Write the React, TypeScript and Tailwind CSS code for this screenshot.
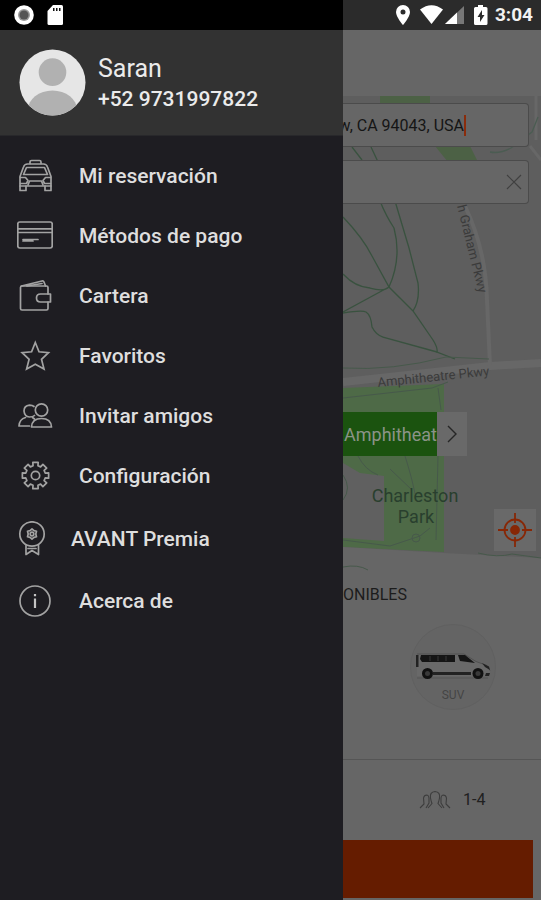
import React from "react";

const line = {
  fill: "none",
  stroke: "#a3a3a3",
  strokeWidth: 1.7,
  strokeLinejoin: "round",
  strokeLinecap: "round",
} as const;

function Icon({ children }: { children: React.ReactNode }) {
  return (
    <svg viewBox="0 0 36 36" className="size-9 shrink-0" {...line} aria-hidden="true">
      {children}
    </svg>
  );
}

const gearPath = (() => {
  const teeth = 8;
  const pts: string[] = [];
  for (let i = 0; i < teeth; i++) {
    const a = (i * 2 * Math.PI) / teeth - Math.PI / 2;
    const steps: [number, number][] = [
      [-0.25, 10],
      [-0.2, 13.4],
      [0.2, 13.4],
      [0.25, 10],
    ];
    for (const [d, r] of steps) {
      pts.push(`${(18.5 + r * Math.cos(a + d)).toFixed(2)} ${(17.5 + r * Math.sin(a + d)).toFixed(2)}`);
    }
  }
  return `M${pts.join("L")}Z`;
})();

const icons = {
  taxi: (
    <Icon>
      <path d="M13 5.500V4Q13 2.500 14.500 2.500H22.500Q24 2.500 24 4V5.500" />
      <path d="M3 18.500L6.500 9Q7.500 6 10.500 6H26.500Q29.500 6 30.500 9L34 18.500V28H3Z" />
      <path d="M6.500 16.500L9.500 9.500H27.500L30.500 16.500Z" />
      <path d="M3.500 19.500H8.500L11 22.500L9.500 25.500H3.500M33.500 19.500H28.500L26 22.500L27.500 25.500H33.500" />
      <path d="M11 27L12.500 23H24.500L26 27" />
      <path d="M3 28V32.500H9V28M28 28V32.500H34V28" />
    </Icon>
  ),
  card: (
    <Icon>
      <rect x="0.800" y="4" width="34.400" height="26" rx="2" />
      <path d="M1 10.800H35M1 14.500H35" />
      <path d="M6 21.500H21M6 23H16" />
    </Icon>
  ),
  wallet: (
    <Icon>
      <path d="M31 16V9.500Q31 8 29.500 8H5Q3.500 8 3.500 9.500V30.500Q3.500 32 5 32H29.500Q31 32 31 30.500V24" />
      <path d="M4.500 8L25 3Q26.500 2.700 27 4L28.500 8M10 8L25 5.500" />
      <path d="M33.500 16H23.500Q19.500 16 19.500 20T23.500 24H33.500Z" />
    </Icon>
  ),
  star: (
    <Icon>
      <path
        strokeLinejoin="miter"
        d="M18.300 4.500L22 13.800L31.500 14.600L24.500 21.300L27 31L18.300 26.300L9.600 31L12.100 21.300L5.100 14.600L14.600 13.800Z"
      />
    </Icon>
  ),
  friends: (
    <Icon>
      <circle cx="24.500" cy="12" r="6.200" />
      <path d="M14.500 29Q15 20.500 24.500 20.500T34.500 29Z" />
      <path d="M17 8.500Q15.500 7.200 12.500 7.200Q7 7.700 7 13Q7.500 18.500 12.500 19Q16 19 17.500 17.500" />
      <path d="M8.500 19.500Q2.500 21 2 28H12.500M15.500 19.500L17.500 21" />
    </Icon>
  ),
  gear: (
    <Icon>
      <path d={gearPath} />
      <circle cx="18.500" cy="17.500" r="4.200" />
    </Icon>
  ),
  award: (
    <Icon>
      <circle cx="18" cy="13" r="12.200" />
      <path d="M18 8L20 9.600L22.500 10.300L21.800 13L22.500 15.700L20 16.400L18 18L16 16.400L13.500 15.700L14.200 13L13.500 10.300L16 9.600Z" />
      <circle cx="18" cy="13" r="1.800" />
      <path d="M12 24.500V33.500L18 29.500L24.500 33.500V24.500M14 27.500H22" />
    </Icon>
  ),
  info: (
    <Icon>
      <circle cx="18" cy="18" r="15" />
      <path stroke="#c4c4c4" strokeWidth="2.200" strokeLinecap="butt" d="M18 11V13.200M18 15.500V25" />
    </Icon>
  ),
};

const items = [
  { icon: icons.taxi, label: "Mi reservación" },
  { icon: icons.card, label: "Métodos de pago" },
  { icon: icons.wallet, label: "Cartera" },
  { icon: icons.star, label: "Favoritos" },
  { icon: icons.friends, label: "Invitar amigos" },
  { icon: icons.gear, label: "Configuración" },
];

const row = "flex w-full items-center text-left text-[21px] leading-7 font-medium text-[#dedede]";

function Drawer() {
  return (
    <aside className="flex w-[343px] shrink-0 flex-col bg-[#1e1d22]">
      <div className="flex h-[30px] items-center gap-3 bg-black pl-[14px]">
        <svg viewBox="0 0 20 20" className="size-5" aria-hidden="true">
          <circle cx="10" cy="10" r="9.800" fill="#fff" />
          <circle cx="10" cy="10" r="6" fill="#999" />
          <circle cx="10" cy="10" r="4.500" fill="#555" />
        </svg>
        <svg viewBox="0 0 18 20" className="h-5 w-[18px]" aria-hidden="true">
          <path d="M7 0H15.500Q17 0 17 1.500V18.500Q17 20 15.500 20H3Q1.500 20 1.500 18.500V6Z" fill="#fff" />
          <path d="M7 3H8.500V6H7ZM10 3H11.500V6H10ZM13 3H14.500V6H13Z" fill="#111" />
        </svg>
      </div>
      <header className="flex h-[106px] items-center gap-3 border-b border-[#28282b] bg-[#323232] pl-[19px]">
        <svg viewBox="0 0 68 68" className="size-[67px]" aria-hidden="true">
          <defs>
            <clipPath id="face">
              <circle cx="34" cy="34" r="33.500" />
            </clipPath>
          </defs>
          <g clipPath="url(#face)">
            <path d="M0 0H68V68H0Z" fill="#e6e6e6" />
            <circle cx="34" cy="23.500" r="14" fill="#b1b1b1" />
            <ellipse cx="34" cy="62" rx="25" ry="20" fill="#b1b1b1" />
          </g>
        </svg>
        <div className="text-[#ebebeb]">
          <p className="text-[25px] leading-8">Saran</p>
          <p className="text-[21px] leading-7 font-medium">+52 9731997822</p>
        </div>
      </header>
      <nav className="pt-[10px]">
        <ul>
          {items.map((item) => (
            <li key={item.label}>
              <button type="button" className={`${row} h-[60px] gap-[26px] pl-[17px]`}>
                {item.icon}
                {item.label}
              </button>
            </li>
          ))}
        </ul>
        <ul className="pt-0.5">
          <li>
            <button type="button" className={`${row} h-[62px] gap-[21px] pl-[14px]`}>
              {icons.award}
              AVANT Premia
            </button>
          </li>
          <li>
            <button type="button" className={`${row} h-[62px] gap-[26px] pl-[17px]`}>
              {icons.info}
              Acerca de
            </button>
          </li>
        </ul>
      </nav>
    </aside>
  );
}

function StatusIcons() {
  return (
    <div className="flex h-[30px] shrink-0 items-center justify-end bg-[#2b2b2b] pr-2">
      <svg viewBox="0 0 94 20" className="mr-1.5 h-5 w-[94px]" fill="#fff" aria-hidden="true">
        <path
          fillRule="evenodd"
          d="M8 0A7 7 0 0 0 1 7C1 12 8 20 8 20S15 12 15 7A7 7 0 0 0 8 0ZM8 4.500A2.500 2.500 0 1 1 8 9.500A2.500 2.500 0 1 1 8 4.500Z"
        />
        <path d="M25 4.500Q36.500 -4 48 4.500L36.500 19Z" />
        <path d="M69 1V19H50Z" fill="#777" />
        <path d="M62 7.500V19H50Z" />
        <path
          fillRule="evenodd"
          d="M83 0H88V2H91Q92.500 2 92.500 3.500V18.500Q92.500 20 91 20H80.500Q79 20 79 18.500V3.500Q79 2 80.500 2H83ZM87 5L82.500 12H85V17L89.500 10H87Z"
        />
      </svg>
      <span className="text-[19px] leading-6 font-bold text-[#f2f2f2]">3:04</span>
    </div>
  );
}

function MapArt() {
  return (
    <svg
      viewBox="343 96 198 475"
      preserveAspectRatio="xMinYMin slice"
      className="block h-full w-full"
      role="img"
      aria-label="Map"
    >
      <path d="M343 96H541V571H343Z" fill="#5e5e5e" />
      <path d="M380 96H430V110H380Z" fill="#4c6145" />
      <path d="M435 146H470L478 162H448Z" fill="#4c6145" />
      <g fill="none" stroke="#676767">
        <path d="M343 382L490 366L541 363" strokeWidth="8" />
        <path d="M465 206Q486 250 487 300L490 366" strokeWidth="4" />
        <path d="M536 96V140M530 146L541 160" strokeWidth="3" />
      </g>
      <path d="M343 388L444 384V552L343 547Z" fill="#4e6a47" />
      <path d="M343 463L360 473L384 476V541L343 538Z" fill="#606060" />
      <path d="M343 547L444 553L541 558V571H343Z" fill="#666" />
      <g fill="none" stroke="#39523f" strokeWidth="1.300">
        <path d="M343 217Q363 238 372 256L389 287L413 311L433 340Q438 348 437 352L455 359" />
        <path d="M352 147L362 160M371 147L379 164M380 201Q386 216 394 228Q402 258 389 287" />
        <path d="M395 201L409 248L418 283Q420 301 413 311" />
        <path d="M343 274Q355 287 370 288Q384 292 389 287L343 312" />
        <path d="M343 313Q362 310 366 312Q371 315 372 327Q376 335 383 337L437 352" />
        <path d="M490 152Q500 154 511 148L532 132L538 117" stroke="#4b5c52" />
      </g>
      <g fill="none" stroke="#47594b" strokeWidth="1">
        <path d="M343 368Q392 371 446 357L489 359" />
        <path d="M343 398L432 388L448 382M438 388L441 410M343 540L390 546L420 536L430 528" />
        <path d="M358 456Q365 470 378 475M390 469L412 490M405 456Q412 478 415 494M438 456L436 540" />
        <path d="M343 475Q352 488 343 500M343 567Q358 564 368 570M478 553Q498 558 512 554L541 558" />
        <circle cx="416" cy="538" r="4" />
      </g>
      <g fontFamily="Roboto, sans-serif" fill="#3b3b3b">
        <text x="378" y="387" fontSize="13" transform="rotate(-6 378 387)">
          Amphitheatre Pkwy
        </text>
        <text x="457" y="206" fontSize="13" transform="rotate(76 457 206)">
          h Graham Pkwy
        </text>
      </g>
      <g fontFamily="Roboto, sans-serif" fontSize="18" fill="#293f2e" textAnchor="middle">
        <text x="415" y="502">Charleston</text>
        <text x="416" y="523">Park</text>
      </g>
    </svg>
  );
}

const field = "flex h-11 items-center justify-end overflow-hidden rounded-r border border-l-0 border-[#4b4b4b] bg-[#666]";

function Booking() {
  return (
    <main className="flex min-w-0 flex-1 flex-col overflow-hidden bg-[#666]">
      <StatusIcons />
      <div className="h-[66px] shrink-0" />
      <section className="relative h-[475px] shrink-0">
        <MapArt />
        <form className="absolute inset-x-0 top-[7px] flex flex-col gap-[13px] pr-3">
          <div className={field}>
            <input
              aria-label="Origen"
              defaultValue="w, CA 94043, USA"
              className="w-40 shrink-0 bg-transparent pt-0.5 text-right text-[16px] text-[#151515] outline-none"
            />
            <span className="mr-[62px] h-[21px] w-0.5 shrink-0 bg-[#8a2c0c]" />
          </div>
          <div className={field}>
            <input aria-label="Destino" className="min-w-0 flex-1 bg-transparent outline-none" />
            <button type="button" aria-label="Borrar" className="mr-[6px]">
              <svg viewBox="0 0 16 16" className="size-4" fill="none" stroke="#404040" strokeWidth="1.200">
                <path d="M1 1L15 15M15 1L1 15" />
              </svg>
            </button>
          </div>
        </form>
        <button type="button" className="absolute top-[316px] left-0 flex h-11 items-center">
          <span className="flex h-full w-[94px] items-center justify-end bg-[#1b530f] text-[18px] text-[#8b9388]">
            Amphitheat
          </span>
          <span className="flex h-full w-[30px] items-center justify-center bg-[#696969]">
            <svg viewBox="0 0 10 18" className="h-[18px] w-2.5" fill="none" stroke="#262626" strokeWidth="1.400">
              <path d="M1 1L9 9L1 17" />
            </svg>
          </span>
        </button>
        <button
          type="button"
          aria-label="Mi ubicación"
          className="absolute right-[5px] bottom-5 flex size-[42px] items-center justify-center bg-[#696969]"
        >
          <svg viewBox="0 0 36 36" className="size-9" fill="none" stroke="#872706" strokeWidth="1.800">
            <circle cx="18" cy="18" r="10.500" />
            <circle cx="18" cy="18" r="4" fill="#872706" />
            <path d="M18 1V11M18 25V35M1 18H11M25 18H35" />
          </svg>
        </button>
      </section>
      <section className="flex h-[189px] shrink-0 flex-col border-b border-[#555] pt-3">
        <h2 className="text-[16px] leading-6 text-[#1c1c1c]">ONIBLES</h2>
        <button
          type="button"
          className="mt-[17px] ml-[67px] flex size-[86px] flex-col items-center rounded-full border border-[#606060] bg-[#646464] pt-[28px] text-[12px] leading-4 text-[#444]"
        >
          <svg viewBox="0 0 76 28" className="mb-[6px] h-7 w-[76px] shrink-0" aria-hidden="true">
            <path d="M2 2H48L61 8L72 12L75 19L73 23H2Z" fill="#696969" />
            <path d="M2 1H49L61 8.500L72 12.500L75 17.500" fill="none" stroke="#505050" />
            <path d="M6 2H40V9H7L5 6ZM43 2H50L60 10L45 8Z" fill="#151515" />
            <path d="M15 3V8M23 3V8M31 3V8" stroke="#383838" />
            <path d="M1 2H3.500V14H1ZM18 19H56V22H18Z" fill="#222" />
            <path d="M67 10L74 13.500L75 17L70 14ZM71 20H75L74 23H70Z" fill="#222" />
            <path d="M2 25H73" stroke="#555" />
            <circle cx="12.500" cy="20.500" r="5.500" fill="#111" />
            <circle cx="63" cy="20.500" r="5.500" fill="#111" />
            <circle cx="12.500" cy="20.500" r="2.500" fill="#393939" />
            <circle cx="63" cy="20.500" r="2.500" fill="#393939" />
          </svg>
          SUV
        </button>
      </section>
      <div className="flex h-20 shrink-0 items-center gap-3 pl-[76px] text-[16px] text-[#202020]">
        <svg viewBox="0 0 32 20" className="h-5 w-8" fill="none" stroke="#3d3d3d" strokeWidth="1.100" aria-hidden="true">
          <path d="M9 18L13 13.500Q12 11 11.500 8Q10.500 2 16 1.500Q21.500 2 20.500 8Q20 11 19 13.500L23 18" />
          <path d="M1 18L5 14L4.500 8Q5 5 8 5Q10 5.500 10 8V13L7 18M31 18L27 14L27.500 8Q27 5 24 5Q22 5.500 22 8V13L25 18" />
        </svg>
        1-4
      </div>
      <button type="button" aria-label="Reservar" className="mr-2 mb-0.5 min-h-[58px] flex-1 bg-[#651c00]" />
    </main>
  );
}

export default function App() {
  return (
    <div className="flex min-h-screen bg-[#666] font-[Roboto,sans-serif]">
      <Drawer />
      <Booking />
    </div>
  );
}
